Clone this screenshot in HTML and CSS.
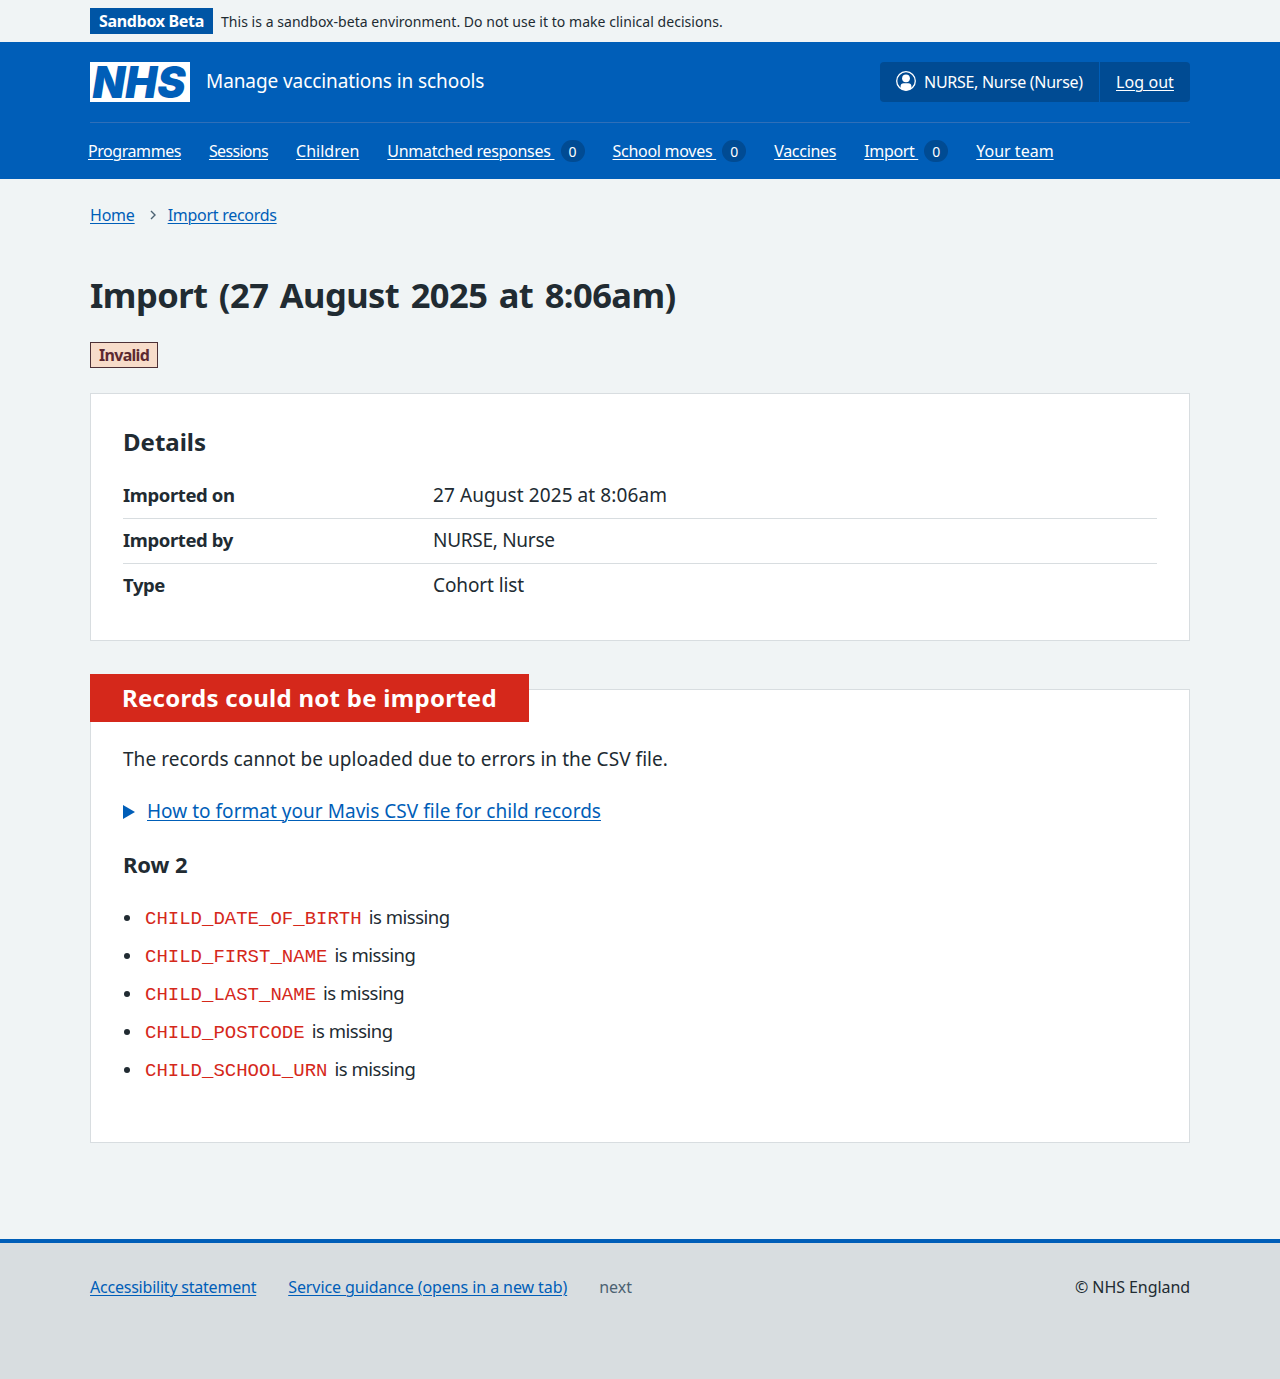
FILE: index.html
```
<!DOCTYPE html>
<html lang="en">
<head>
<meta charset="utf-8">
<title>Import (27 August 2025 at 8:06am) – Manage vaccinations in schools</title>
<link rel="stylesheet" href="styles.css">
</head>
<body>
<div class="environment">
  <div class="container environment-inner">
    <strong class="environment-tag">Sandbox Beta</strong>
    <span class="environment-text">This is a sandbox-beta environment. Do not use it to make clinical decisions.</span>
  </div>
</div>
<header class="header">
  <div class="container">
    <div class="header-top">
      <div class="service">
        <svg class="logo" width="100" height="40" viewBox="0 0 100 40" role="img" aria-label="NHS">
          <rect width="100" height="40" fill="#fff"/>
          <text class="logo-text" x="2.5" y="36.3" textLength="93" lengthAdjust="spacingAndGlyphs">NHS</text>
        </svg>
        <span class="service-name">Manage vaccinations in schools</span>
      </div>
      <div class="account">
        <div class="account-item account-user">
          <svg class="account-icon" width="20" height="20" viewBox="0 0 20 20" aria-hidden="true">
            <circle cx="10" cy="10" r="9.3" fill="none" stroke="#fff" stroke-width="1.3"/>
            <circle cx="10" cy="7.3" r="3.9" fill="#fff"/>
            <path fill="#fff" d="M7.7 12.2h4.6c1.9 0 3.1 1.2 3.1 3v2.6A9.4 9.4 0 0 1 10 19.5a9.4 9.4 0 0 1-5.4-1.7v-2.6c0-1.8 1.2-3 3.1-3z"/>
          </svg>
          <span class="t28">NURSE, Nurse (Nurse)</span>
        </div>
        <div class="account-item account-logout"><a href="#">Log out</a></div>
      </div>
    </div>
    <nav class="nav">
      <a class="t44" href="#">Programmes</a>
      <a class="t68" href="#">Sessions</a>
      <a href="#">Children</a>
      <span class="nav-item"><a class="t28" href="#">Unmatched responses </a><span class="count">0</span></span>
      <span class="nav-item"><a class="t28" href="#">School moves </a><span class="count">0</span></span>
      <a class="t28" href="#">Vaccines</a>
      <span class="nav-item"><a class="t35" href="#">Import </a><span class="count">0</span></span>
      <a href="#">Your team</a>
    </nav>
  </div>
</header>
<main class="container main">
  <nav class="breadcrumb">
    <a class="t22" href="#">Home</a>
    <svg width="6" height="10" viewBox="0 0 6 10" aria-hidden="true"><path d="M1 1l4 4-4 4" fill="none" stroke="#4c6272" stroke-width="1.4"/></svg>
    <a class="t28" href="#">Import records</a>
  </nav>
  <h1 class="title">Import (27 August 2025 at 8:06am)</h1>
  <strong class="tag">Invalid</strong>
  <section class="card">
    <h2 class="card-heading">Details</h2>
    <dl class="summary">
      <div class="summary-row"><dt>Imported on</dt><dd class="date">27 August 2025 at 8:06am</dd></div>
      <div class="summary-row"><dt>Imported by</dt><dd class="t28">NURSE, Nurse</dd></div>
      <div class="summary-row"><dt>Type</dt><dd class="t10">Cohort list</dd></div>
    </dl>
  </section>
  <section class="card card-feature">
    <h2 class="feature-heading">Records could not be imported</h2>
    <p class="feature-text">The records cannot be uploaded due to errors in the CSV file.</p>
    <div class="details">
      <svg width="12" height="14" viewBox="0 0 12 14" aria-hidden="true"><path d="M0 0l12 7-12 7z" fill="#005eb8"/></svg>
      <a href="#">How to format your Mavis CSV file for child records</a>
    </div>
    <h3 class="row-heading">Row 2</h3>
    <ul class="errors">
      <li><code>CHILD_DATE_OF_BIRTH</code><span>is missing</span></li>
      <li><code>CHILD_FIRST_NAME</code><span>is missing</span></li>
      <li><code>CHILD_LAST_NAME</code><span>is missing</span></li>
      <li><code>CHILD_POSTCODE</code><span>is missing</span></li>
      <li><code>CHILD_SCHOOL_URN</code><span>is missing</span></li>
    </ul>
  </section>
</main>
<footer class="footer">
  <div class="container footer-inner">
    <div class="footer-links">
      <a class="t22" href="#">Accessibility statement</a>
      <a class="guidance" href="#">Service guidance (opens in a new tab)</a>
      <span class="next">next</span>
    </div>
    <span class="copyright">© NHS England</span>
  </div>
</footer>
</body>
</html>
```

FILE: styles.css
```
* { box-sizing: border-box; }

body {
  margin: 0;
  min-height: 1379px;
  display: flex;
  flex-direction: column;
  background: #f0f4f5;
  color: #212b32;
  font: 16px/24px "Noto Sans", sans-serif;
}

h1, h2, h3, p, ul, dl, dd { margin: 0; }
a { color: #005eb8; text-decoration-thickness: 1px; text-underline-offset: 2px; }
.container { width: 1100px; margin: 0 auto; }

/* Letter-spacing steps, in hundredths of a pixel */
.t10 { letter-spacing: -0.1px; }
.t22 { letter-spacing: -0.22px; }
.t28 { letter-spacing: -0.28px; }
.t35 { letter-spacing: -0.35px; }
.t44 { letter-spacing: -0.44px; }
.t68 { letter-spacing: -0.68px; }

.environment-inner { display: flex; align-items: center; gap: 8px; height: 42px; }
.environment-tag {
  width: 123px;
  height: 26px;
  padding-left: 9px;
  background: #0055a5;
  color: #fff;
  line-height: 26px;
  letter-spacing: -0.32px;
}
.environment-text { padding-top: 1px; font-size: 14px; letter-spacing: 0.04px; }

.header { height: 137px; background: #005eb8; color: #fff; }
.header a { color: #fff; white-space: pre; }
.header-top {
  display: flex;
  justify-content: space-between;
  height: 81px;
  padding-top: 20px;
  border-bottom: 1px solid #2f6fb8;
}
.service { display: flex; gap: 16px; height: 40px; }
.logo { overflow: visible; }
.logo-text { font: italic 900 44px Inter, sans-serif; fill: #005eb8; }
.service-name { font-size: 19px; line-height: 38px; letter-spacing: -0.09px; }
.account { display: flex; height: 40px; border-radius: 4px; background: #004b93; line-height: 40px; }
.account-item { padding: 0 16px; }
.account-user { display: flex; gap: 8px; width: 220px; border-right: 1px solid #005eb8; white-space: nowrap; }
.account-icon { flex: none; margin-top: 9px; }
.account-logout { width: 90px; letter-spacing: 0.08px; }
.nav { display: flex; gap: 28px; margin-left: -2px; padding-top: 16px; }
.nav-item { display: flex; align-items: center; gap: 6px; }
.count { width: 24px; height: 22px; border-radius: 12px; background: #004b93; font-size: 14px; line-height: 23px; text-align: center; }

.breadcrumb { display: flex; align-items: center; gap: 12px; padding-top: 24px; }
.breadcrumb svg { margin-left: 3px; }
.title { margin-top: 44px; font-size: 34.5px; line-height: 48px; letter-spacing: -0.56px; word-spacing: 3px; }
.tag {
  display: block;
  width: 68px;
  height: 26px;
  margin-top: 23px;
  padding-left: 8px;
  border: 1px solid #4d3036;
  background: #f7dcca;
  color: #5c2830;
  line-height: 24px;
  letter-spacing: -0.7px;
}

.card { margin-top: 25px; padding: 32px; border: 1px solid #d8dde0; background: #fff; }
.card-heading { font-size: 24px; line-height: 32px; }
.summary { margin-top: 16px; font-size: 19px; line-height: 28px; }
.summary-row { display: flex; padding: 7px 0 9px; border-bottom: 1px solid #d8dde0; }
.summary-row:last-child { border-bottom: 0; }
.summary dt { width: 310px; font-size: 18.5px; font-weight: 700; letter-spacing: -0.4px; }
.summary .date { letter-spacing: 0.088px; }
.card-feature { height: 454px; margin-top: 48px; padding-top: 0; font-size: 19px; line-height: 28px; }
.feature-heading {
  width: 439px;
  margin: -16px 0 23px -33px;
  padding: 8px 0 8px 32px;
  background: #d5281b;
  color: #fff;
  font-size: 24px;
  line-height: 32px;
  letter-spacing: 0.27px;
}
.feature-text { letter-spacing: 0.05px; }
.details { display: flex; align-items: center; gap: 12px; margin-top: 24px; letter-spacing: 0.027px; }
.details svg { margin-top: 1px; }
.row-heading { margin-top: 24px; font-size: 22px; line-height: 30px; letter-spacing: -0.1px; }
.errors { display: grid; gap: 8px; margin-top: 23px; padding: 0; list-style: none; line-height: 30px; }
.errors li { display: flex; align-items: center; height: 30px; }
.errors li::before { content: ""; width: 6px; height: 6px; margin: 1px 15px 0 1px; border-radius: 50%; background: #212b32; }
.errors span { font-size: 18.5px; letter-spacing: -0.48px; }
.errors code { margin-right: 7px; padding-top: 3px; color: #d5281b; font: 19px/30px "Liberation Mono", monospace; }

.footer { flex: 1; margin-top: 96px; padding-top: 32px; border-top: 4px solid #005eb8; background: #d8dde0; }
.footer-inner { display: flex; justify-content: space-between; }
.footer-links { display: flex; gap: 32px; }
.guidance { letter-spacing: -0.083px; }
.next { color: #4c6272; }
.copyright { letter-spacing: -0.07px; }
```
